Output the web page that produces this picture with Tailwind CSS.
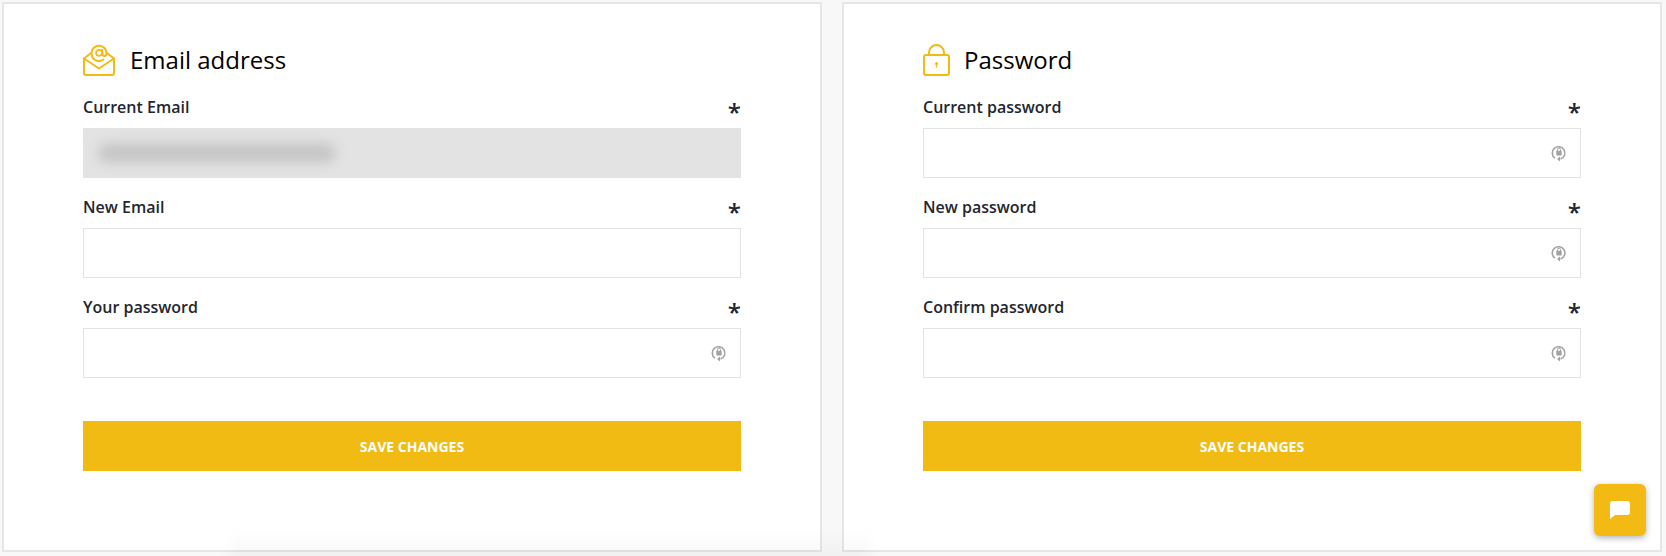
<!DOCTYPE html>
<html lang="en">
<head>
    <meta charset="UTF-8">
    <title>Account settings</title>
    <script src="https://cdn.jsdelivr.net/npm/@tailwindcss/browser@4"></script>
</head>
<body class="bg-[#f8f8f8] font-['Open_Sans',sans-serif] w-[1666px] h-[556px] overflow-hidden relative">
    <div class="flex gap-[20px] pl-[2px] pt-[2px]">
        <!-- Email card -->
        <section class="w-[820px] h-[550px] bg-white border-2 border-[#e6e6e6] pl-[79px] pr-[79px] pt-[39px]">
            <div class="flex items-center gap-[15px] h-[34px]">
                <svg class="w-[32px] h-[32px]" viewBox="0 0 32 32" fill="none" stroke="#f2ba13" stroke-width="2" stroke-linejoin="round" stroke-linecap="round">
                    <path d="M1 14.500V29a2 2 0 0 0 2 2h26a2 2 0 0 0 2-2V14.500"/>
                    <path d="M1 14.500l7-5.500M31 14.500l-7-5.500M1 14.500L16 24.500l15-10"/>
                    <path d="M20.500 15.500A7.600 7.600 0 1 1 23.600 9c0 2-.8 3-2.100 3s-2-1-2-2.500"/>
                    <circle cx="16" cy="8.800" r="3" stroke-width="1.700"/>
                    <path d="M19.300 5.500v4" stroke-width="1.700"/>
                </svg>
                <h2 class="text-[24px] leading-[34px] text-black">Email address</h2>
            </div>
            <div class="mt-[18px] flex justify-between h-[24px] items-center">
                <label class="text-[16px] font-semibold text-[#22262e]">Current Email</label>
                <span class="text-[24px] leading-[24px] pt-[9px] font-semibold text-[#22262e]">*</span>
            </div>
            <div class="mt-[9px] h-[50px] bg-[#e3e3e3] flex items-center pl-[15px]">
                <div class="w-[238px] h-[20px] rounded-full bg-[#c6c6c6] blur-[6px]"></div>
            </div>
            <div class="mt-[17px] flex justify-between h-[24px] items-center">
                <label class="text-[16px] font-semibold text-[#22262e]">New Email</label>
                <span class="text-[24px] leading-[24px] pt-[9px] font-semibold text-[#22262e]">*</span>
            </div>
            <div class="mt-[9px] h-[50px] bg-white border border-[#e3e3e3]"></div>
            <div class="mt-[17px] flex justify-between h-[24px] items-center">
                <label class="text-[16px] font-semibold text-[#22262e]">Your password</label>
                <span class="text-[24px] leading-[24px] pt-[9px] font-semibold text-[#22262e]">*</span>
            </div>
            <div class="mt-[9px] h-[50px] bg-white border border-[#e3e3e3] flex items-center justify-end pr-[13px]">
                <svg class="w-[16px] h-[18px]" viewBox="0 0 16 18" fill="none">
                    <path d="M4 14.200A6.300 6.300 0 1 1 9.500 15" stroke="#a2a2a2" stroke-width="1.600"/>
                    <path d="M9 12.500v5l-3-2.500z" fill="#a2a2a2"/>
                    <rect x="5.300" y="6.800" width="5.400" height="4.600" rx="0.600" fill="#a2a2a2"/>
                    <path d="M6.500 7V5.600a1.500 1.500 0 0 1 3 0V7" stroke="#a2a2a2"/>
                </svg>
            </div>
            <button class="mt-[43px] w-full h-[50px] bg-[#f1bb13] text-white text-[14px] font-bold">SAVE CHANGES</button>
        </section>

        <!-- Password card -->
        <section class="w-[820px] h-[550px] bg-white border-2 border-[#e6e6e6] pl-[79px] pr-[79px] pt-[39px]">
            <div class="flex items-center gap-[14px] h-[34px]">
                <svg class="w-[27px] h-[32px]" viewBox="0 0 27 32" fill="none" stroke="#f2ba13" stroke-width="2" stroke-linejoin="round">
                    <rect x="1" y="11" width="25" height="20" rx="2"/>
                    <path d="M6 11V8.500a7.500 7.500 0 0 1 15 0V11"/>
                    <circle cx="13.500" cy="19.500" r="1.500" fill="#f2ba13" stroke="none"/>
                    <path d="M13.500 20v3.500" stroke-width="1.200"/>
                </svg>
                <h2 class="text-[24px] leading-[34px] text-black">Password</h2>
            </div>
            <div class="mt-[18px] flex justify-between h-[24px] items-center">
                <label class="text-[16px] font-semibold text-[#22262e]">Current password</label>
                <span class="text-[24px] leading-[24px] pt-[9px] font-semibold text-[#22262e]">*</span>
            </div>
            <div class="mt-[9px] h-[50px] bg-white border border-[#e3e3e3] flex items-center justify-end pr-[13px]">
                <svg class="w-[16px] h-[18px]" viewBox="0 0 16 18" fill="none">
                    <path d="M4 14.200A6.300 6.300 0 1 1 9.500 15" stroke="#a2a2a2" stroke-width="1.600"/>
                    <path d="M9 12.500v5l-3-2.500z" fill="#a2a2a2"/>
                    <rect x="5.300" y="6.800" width="5.400" height="4.600" rx="0.600" fill="#a2a2a2"/>
                    <path d="M6.500 7V5.600a1.500 1.500 0 0 1 3 0V7" stroke="#a2a2a2"/>
                </svg>
            </div>
            <div class="mt-[17px] flex justify-between h-[24px] items-center">
                <label class="text-[16px] font-semibold text-[#22262e]">New password</label>
                <span class="text-[24px] leading-[24px] pt-[9px] font-semibold text-[#22262e]">*</span>
            </div>
            <div class="mt-[9px] h-[50px] bg-white border border-[#e3e3e3] flex items-center justify-end pr-[13px]">
                <svg class="w-[16px] h-[18px]" viewBox="0 0 16 18" fill="none">
                    <path d="M4 14.200A6.300 6.300 0 1 1 9.500 15" stroke="#a2a2a2" stroke-width="1.600"/>
                    <path d="M9 12.500v5l-3-2.500z" fill="#a2a2a2"/>
                    <rect x="5.300" y="6.800" width="5.400" height="4.600" rx="0.600" fill="#a2a2a2"/>
                    <path d="M6.500 7V5.600a1.500 1.500 0 0 1 3 0V7" stroke="#a2a2a2"/>
                </svg>
            </div>
            <div class="mt-[17px] flex justify-between h-[24px] items-center">
                <label class="text-[16px] font-semibold text-[#22262e]">Confirm password</label>
                <span class="text-[24px] leading-[24px] pt-[9px] font-semibold text-[#22262e]">*</span>
            </div>
            <div class="mt-[9px] h-[50px] bg-white border border-[#e3e3e3] flex items-center justify-end pr-[13px]">
                <svg class="w-[16px] h-[18px]" viewBox="0 0 16 18" fill="none">
                    <path d="M4 14.200A6.300 6.300 0 1 1 9.500 15" stroke="#a2a2a2" stroke-width="1.600"/>
                    <path d="M9 12.500v5l-3-2.500z" fill="#a2a2a2"/>
                    <rect x="5.300" y="6.800" width="5.400" height="4.600" rx="0.600" fill="#a2a2a2"/>
                    <path d="M6.500 7V5.600a1.500 1.500 0 0 1 3 0V7" stroke="#a2a2a2"/>
                </svg>
            </div>
            <button class="mt-[43px] w-full h-[50px] bg-[#f1bb13] text-white text-[14px] font-bold">SAVE CHANGES</button>
        </section>
    </div>

    <!-- Faint shadow along the bottom edge -->
    <div class="absolute left-[230px] top-[528px] w-[640px] h-[40px] pointer-events-none bg-linear-to-t from-black/4 to-transparent blur-[6px]"></div>

    <!-- Chat launcher -->
    <div class="absolute left-[1594px] top-[484px] w-[52px] h-[52px] rounded-[6px] bg-[#f2ba13] shadow-[0_2px_6px_rgba(0,0,0,0.3)] flex items-center justify-center">
        <svg class="w-[20px] h-[18px]" viewBox="0 0 20 18">
            <path d="M3 0h14a3 3 0 0 1 3 3v8a3 3 0 0 1-3 3H5l-5 4V3a3 3 0 0 1 3-3z" fill="#fff"/>
        </svg>
    </div>
</body>
</html>
